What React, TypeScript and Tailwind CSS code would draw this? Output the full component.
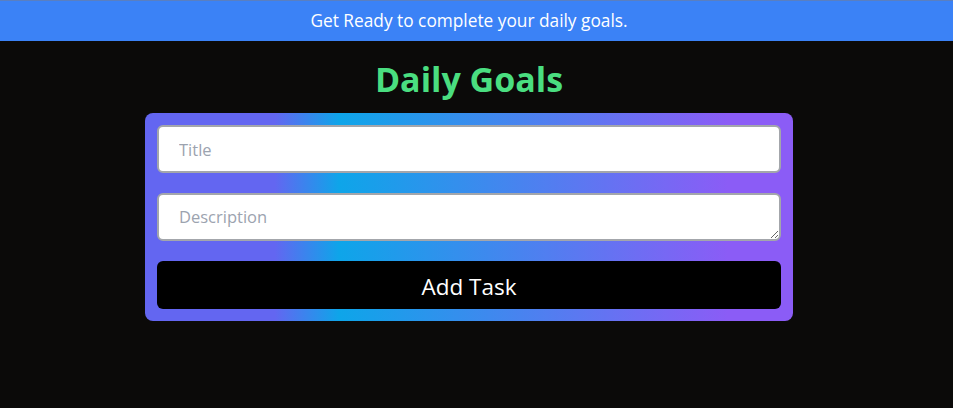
import React from "react";

export default function App() {
  return (
    <div className="min-h-[408px] bg-[#0b0a09]" style={{ fontFamily: '"Open Sans", "Noto Sans", sans-serif' }}>
      <div className="border-t border-[#5a7fc0] bg-[#3b82f6]">
        <div className="w-[938px] h-[40px] flex items-center justify-center text-white text-[17.3px]">
          Get Ready to complete your daily goals.
        </div>
      </div>
      <div className="w-[938px] flex flex-col items-center">
        <h1 className="mt-[14px] text-[34px] leading-[48px] font-bold text-[#4ade80]">Daily Goals</h1>
        <div className="mt-[10px] w-[648px] rounded-lg p-3 flex flex-col gap-5 bg-linear-to-r/srgb from-[#6366f1] from-20% via-[#0ea5e9] via-30% to-[#8b5cf6] to-90%">
          <input
            placeholder="Title"
            className="h-[48px] w-full rounded-md border-2 border-[#a3a6ab] bg-white px-5 text-[16.5px] text-black placeholder:text-[#9ca3af] outline-none"
          />
          <textarea
            placeholder="Description"
            className="h-[48px] w-full rounded-md border-2 border-[#a3a6ab] bg-white px-5 py-[11px] text-[16.5px] leading-[22px] text-black placeholder:text-[#9ca3af] outline-none"
          />
          <button className="h-[48px] w-full rounded-md bg-black pt-[3px] text-white text-[22.5px]">Add Task</button>
        </div>
      </div>
    </div>
  );
}
